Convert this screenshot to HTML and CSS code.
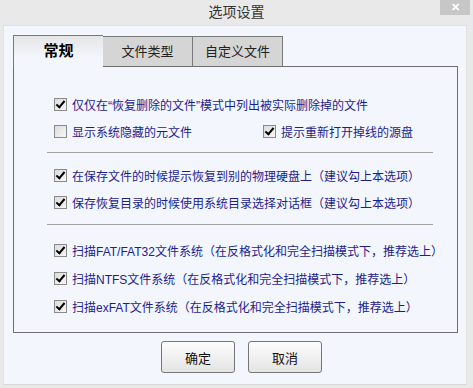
FILE: index.html
```html
<html>
<head>
  <title>选项设置</title>
  <meta charset="utf-8">
  <link rel="stylesheet" href="styles.css">
</head>
<body>

<div class="titlebar">
  <span></span>
  <span class="title">选项设置</span>
  <span class="close">&#x2715;</span>
</div>

<div class="dialog">
  <div class="tabs">
    <div class="tab active">常规</div>
    <div class="tab">文件类型</div>
    <div class="tab">自定义文件</div>
  </div>

  <div class="panel">
    <!-- group 1 -->
    <div class="row">
      <label class="opt"><span class="box on"></span>仅仅在“恢复删除的文件”模式中列出被实际删除掉的文件</label>
    </div>
    <div class="row">
      <label class="opt first"><span class="box"></span>显示系统隐藏的元文件</label>
      <label class="opt"><span class="box on"></span>提示重新打开掉线的源盘</label>
    </div>
    <div class="sep"></div>

    <!-- group 2 -->
    <div class="group2">
      <div class="row">
        <label class="opt"><span class="box on"></span>在保存文件的时候提示恢复到别的物理硬盘上（建议勾上本选项）</label>
      </div>
      <div class="row">
        <label class="opt"><span class="box on"></span>保存恢复目录的时候使用系统目录选择对话框（建议勾上本选项）</label>
      </div>
    </div>
    <div class="sep"></div>

    <!-- group 3 -->
    <div class="group3">
      <div class="row tall">
        <label class="opt"><span class="box on"></span>扫描FAT/FAT32文件系统（在反格式化和完全扫描模式下，推荐选上）</label>
      </div>
      <div class="row tall">
        <label class="opt"><span class="box on"></span>扫描NTFS文件系统（在反格式化和完全扫描模式下，推荐选上）</label>
      </div>
      <div class="row tall">
        <label class="opt"><span class="box on"></span>扫描exFAT文件系统（在反格式化和完全扫描模式下，推荐选上）</label>
      </div>
    </div>
  </div>

  <div class="buttons">
    <button class="btn">确定</button>
    <button class="btn">取消</button>
  </div>
</div>

</body>
</html>
```

FILE: styles.css
```css
* {
  box-sizing: border-box;
}

body {
  margin: 0;
  width: 473px;
  height: 388px;
  background: #e9e9e9;
  font-family: "Liberation Sans", "Noto Sans CJK SC", sans-serif;
  font-size: 12px;
  overflow: hidden;
}

/* title bar */
.titlebar {
  display: grid;
  grid-template-columns: 1fr auto 1fr;
  height: 25px;
}

.title {
  font-size: 14px;
  line-height: 25px;
  color: #333;
}

.close {
  justify-self: end;
  width: 30px;
  height: 15px;
  margin-right: 3px;
  background: #c7c7c7;
  color: #fff;
  font-size: 11px;
  font-weight: bold;
  line-height: 15px;
  text-align: center;
}

/* dialog body */
.dialog {
  margin-left: 3px;
  width: 464px;
  height: 360px;
  background: #f3f6fc;
  border: 1px solid #dfe2e8;
  border-bottom-color: #d8d8d8;
  padding: 9px 0 0 9px;
}

.tabs {
  display: flex;
  height: 31px;
  position: relative;
  z-index: 1;
}

.tab {
  width: 90px;
  height: 30px;
  margin-top: 1px;
  background: #d5d5d5;
  border: 1px solid #7a7a7a;
  border-left: none;
  border-bottom: none;
  text-align: center;
  line-height: 29px;
  font-size: 13px;
  color: #222;
}

.tab.active {
  height: 32px;
  margin-top: 0;
  border-left: 1px solid #7a7a7a;
  border-right: none;
  background: linear-gradient(#e6e6e6, #f3f6fc 70%);
  font-size: 15px;
  font-weight: bold;
  color: #000;
  line-height: 30px;
}

.panel {
  width: 445px;
  height: 267px;
  border: 1px solid #6f6f6f;
  padding-top: 24px;
}

.row {
  display: flex;
  align-items: center;
  height: 27px;
  padding-left: 40px;
}

.row.tall {
  height: 28px;
}

.opt {
  display: flex;
  align-items: center;
  color: #1d1d8e;
  white-space: nowrap;
}

.opt.first {
  width: 209px;
}

.box {
  width: 13px;
  height: 13px;
  margin-right: 5px;
  border: 1px solid #8a8a8a;
  background: linear-gradient(135deg, #dcdcdc, #f7f7f7);
  position: relative;
}

/* check mark */
.box.on::after {
  content: "";
  position: absolute;
  left: 3px;
  top: 0px;
  width: 3px;
  height: 7px;
  border: solid #000;
  border-width: 0 2px 2px 0;
  transform: rotate(40deg);
}

.sep {
  width: 386px;
  height: 1px;
  margin: 7px 0 0 33px;
  background: #a3a3a3;
}

.group2 {
  margin-top: 9px;
}

.group2 + .sep {
  margin-top: 8px;
}

.group3 {
  margin-top: 11px;
}

/* buttons */
.buttons {
  display: flex;
  justify-content: center;
  gap: 13px;
  padding: 8px 0 0 12px;
  width: 445px;
}

.btn {
  width: 74px;
  height: 32px;
  border: 1px solid #767676;
  border-radius: 3px;
  background: linear-gradient(#fdfdfd, #e4e4e4);
  font-family: "Liberation Sans", "Noto Sans CJK SC", sans-serif;
  font-size: 13px;
  color: #111;
}
```
